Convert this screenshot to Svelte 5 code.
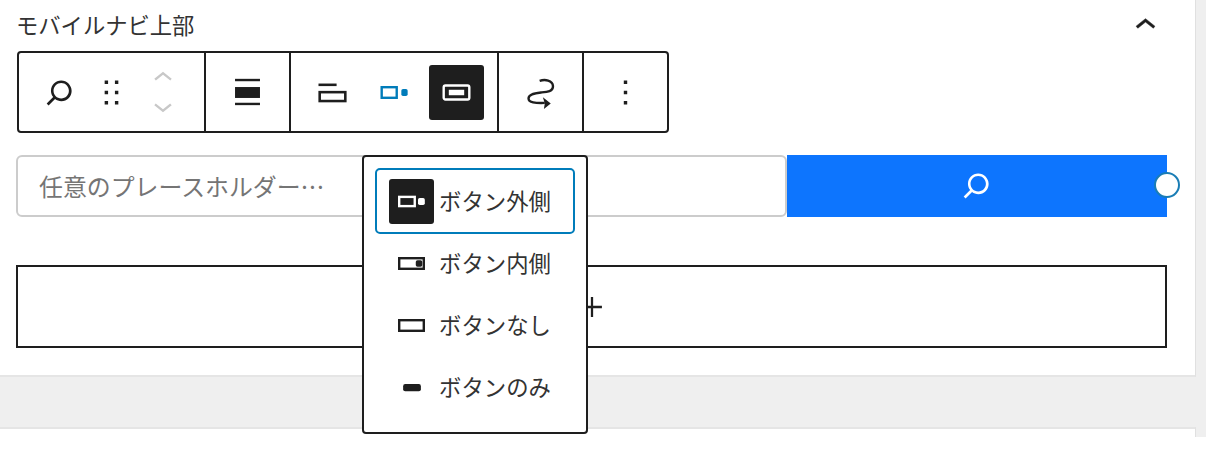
<script>
  const searchPath = 'M13 5c-3.3 0-6 2.7-6 6 0 1.4.5 2.7 1.3 3.7l-3.8 3.8 1.1 1.1 3.8-3.8c1 .8 2.3 1.3 3.7 1.3 3.3 0 6-2.7 6-6S16.3 5 13 5zm0 10.5c-2.5 0-4.5-2-4.500-4.500s2-4.500 4.500-4.500 4.500 2 4.500 4.500-2 4.500-4.500 4.500z';

  const options = [
    { label: 'ボタン外側', kind: 'outside', active: true },
    { label: 'ボタン内側', kind: 'inside' },
    { label: 'ボタンなし', kind: 'none' },
    { label: 'ボタンのみ', kind: 'only' },
  ];
</script>

{#snippet icon(path)}
  <svg class="icon" viewBox="0 0 24 24" fill="currentColor"><path d={path} /></svg>
{/snippet}

<div class="page">
  <section class="panel">
    <header class="head">
      <h2>モバイルナビ上部</h2>
      <svg class="chevron" viewBox="0 0 24 24" fill="currentColor"><path d="M6.5 12.4L12 8l5.5 4.4-.9 1.2L12 10l-4.5 3.6-1-1.2z" /></svg>
    </header>

    <div class="toolbar">
      <div class="group first">
        <button>{@render icon(searchPath)}</button>
        <button>{@render icon('M8 7h2V5H8v2zm0 6h2v-2H8v2zm0 6h2v-2H8v2zm6-14v2h2V5h-2zm0 8h2v-2h-2v2zm0 6h2v-2h-2v2z')}</button>
        <div class="movers">
          <svg viewBox="0 0 24 24" fill="currentColor"><path d="M6.5 12.4L12 8l5.500 4.400-.9 1.200L12 10l-4.500 3.600-1-1.200z" /></svg>
          <svg viewBox="0 0 24 24" fill="currentColor"><path d="M17.500 11.600L12 16l-5.500-4.400.9-1.200L12 14l4.500-3.600 1 1.200z" /></svg>
        </div>
      </div>
      <div class="group single">
        <button>
          <svg class="icon" viewBox="0 0 24 24" fill="currentColor">
            <rect x="4.700" y="4" width="14.600" height="1.400" />
            <rect x="4.700" y="8.800" width="14.600" height="6.400" />
            <rect x="4.700" y="18" width="14.600" height="1.400" />
          </svg>
        </button>
      </div>
      <div class="group triple">
        <button>
          <svg class="icon" viewBox="0 0 24 24" fill="none" stroke="currentColor" stroke-width="1.500">
            <rect x="4.500" y="11.800" width="15" height="5.200" />
            <path d="M3.800 7.500h10.600" />
          </svg>
        </button>
        <button class="blue">
          <svg class="icon" viewBox="0 0 24 24" fill="none" stroke="currentColor" stroke-width="1.400">
            <rect x="4.500" y="8.900" width="8.800" height="6.200" />
            <rect x="16" y="10" width="3.700" height="4" rx="1" fill="currentColor" stroke="none" />
          </svg>
        </button>
        <button class="pressed">
          <svg class="icon" viewBox="0 0 24 24" fill="none" stroke="currentColor" stroke-width="1.400">
            <rect x="4.500" y="7.900" width="15" height="8.200" rx="1" />
            <rect x="7.500" y="10.400" width="9" height="3.200" fill="currentColor" stroke="none" />
          </svg>
        </button>
      </div>
      <div class="group single">
        <button>
          <svg class="icon" viewBox="0 0 24 24" fill="none" stroke="currentColor" stroke-width="1.400">
            <path d="M11.500 5.200c3-1 7.600-.5 7.800 3 .2 3.300-3.800 3.500-7 3.800-4.300.4-7.300 1.300-7.300 3.500 0 2.400 4 2.800 9.500 2.600" />
            <path d="M13.400 14.800l4.600 3.600-4 3.300.5-3.300z" fill="currentColor" stroke="none" />
          </svg>
        </button>
      </div>
      <div class="group single last">
        <button>{@render icon('M13 19h-2v-2h2v2zm0-6h-2v-2h2v2zm0-6h-2V5h2v2z')}</button>
      </div>
    </div>

    <div class="search">
      <div class="field">任意のプレースホルダー…</div>
      <div class="submit">
        <svg class="icon" viewBox="0 0 24 24" fill="currentColor"><path d={searchPath} /></svg>
        <span class="handle"></span>
      </div>
    </div>

    <div class="appender">
      <svg viewBox="0 0 24 24" fill="currentColor"><path d="M11.200 5h1.600v6.200H19v1.600h-6.200V19h-1.600v-6.200H5v-1.600h6.200z" /></svg>
    </div>
  </section>

  <div class="next"></div>

  <div class="menu">
    {#each options as opt}
      <div class="item" class:active={opt.active}>
        <span class="glyph" class:dark={opt.active}>
          <svg class="icon" viewBox="0 0 24 24" fill="none" stroke="currentColor" stroke-width="1.400">
            {#if opt.kind === 'outside'}
              <rect x="4.800" y="9.300" width="9.100" height="5.400" />
              <rect x="15.800" y="10" width="4" height="4" rx="1" fill="currentColor" stroke="none" />
            {:else if opt.kind === 'inside'}
              <rect x="4.800" y="8.900" width="14.400" height="6.200" />
              <rect x="14.500" y="10.100" width="3.800" height="3.800" rx="1" fill="currentColor" stroke="none" />
            {:else if opt.kind === 'none'}
              <rect x="4.800" y="8.900" width="14.400" height="6.200" />
            {:else}
              <rect x="7.100" y="10" width="10.400" height="4.200" rx="1.200" fill="currentColor" stroke="none" />
            {/if}
          </svg>
        </span>
        <span class="label">{opt.label}</span>
      </div>
    {/each}
  </div>
</div>

<style>
  :global(body) {
    background: #fff;
  }

  .page {
    position: relative;
    width: 1206px;
    height: 437px;
    background: #efefef;
    overflow: hidden;
    font-family: "Noto Sans CJK JP", "Noto Sans", sans-serif;
    color: #1e1e1e;
  }

  .panel {
    box-sizing: border-box;
    width: 1196px;
    height: 377px;
    padding-left: 16px;
    background: #fff;
    border-right: 1px solid #e0e0e0;
    border-bottom: 2px solid #e5e5e5;
  }

  .next {
    box-sizing: border-box;
    width: 1196px;
    height: 10px;
    margin-top: 50px;
    background: #fff;
    border-top: 2px solid #e5e5e5;
    border-right: 1px solid #e0e0e0;
  }

  /* Header */
  .head {
    display: flex;
    align-items: center;
    justify-content: space-between;
    height: 51px;
    padding-right: 29px;
  }
  h2 {
    margin: -3px 0 0;
    font-size: 22.300px;
    font-weight: 400;
    line-height: 47px;
    color: #333;
  }
  .chevron {
    width: 41px;
    height: 41px;
    stroke: currentColor;
    stroke-width: 0.3;
  }

  /* Toolbar */
  .toolbar {
    box-sizing: border-box;
    display: flex;
    width: 652px;
    height: 82px;
    margin-left: 1px;
    border: 2px solid #1e1e1e;
    border-radius: 4px;
  }
  .group {
    box-sizing: border-box;
    display: flex;
    align-items: center;
    border-right: 2px solid #1e1e1e;
  }
  .group.last {
    border-right: 0;
  }
  .first {
    width: 187px;
    padding-left: 14px;
  }
  .single {
    width: 85px;
    justify-content: center;
  }
  .single.last {
    width: 83px;
  }
  .triple {
    width: 209px;
    gap: 7px;
    padding-left: 14px;
  }
  button {
    display: flex;
    align-items: center;
    justify-content: center;
    width: 52px;
    height: 55px;
    padding: 0;
    border: 0;
    border-radius: 3px;
    background: none;
    color: inherit;
  }
  .triple button {
    width: 55px;
  }
  .blue {
    color: #007cba;
  }
  .pressed {
    background: #1e1e1e;
    color: #fff;
  }
  .icon {
    display: block;
    width: 41px;
    height: 41px;
  }
  .movers {
    display: flex;
    flex-direction: column;
    align-items: center;
    width: 52px;
    color: #c8c8c8;
  }
  .movers svg {
    width: 38px;
    height: 38px;
    margin: -5px 0;
  }

  /* Search block */
  .search {
    display: flex;
    width: 1151px;
    height: 62px;
    margin-top: 22px;
  }
  .field {
    box-sizing: border-box;
    flex: 1;
    padding-left: 21px;
    border: 2px solid #ccc;
    border-radius: 6px;
    font-size: 23.900px;
    line-height: 57px;
    color: #757575;
  }
  .submit {
    position: relative;
    display: flex;
    align-items: center;
    justify-content: center;
    box-sizing: border-box;
    width: 380px;
    padding: 0 2px 2px 0;
    background: #0d75fe;
    color: #fff;
  }
  .handle {
    position: absolute;
    top: 17px;
    right: -13px;
    box-sizing: border-box;
    width: 26px;
    height: 26px;
    background: #fff;
    border: 2.500px solid #1a7db5;
    border-radius: 50%;
  }

  .appender {
    box-sizing: border-box;
    display: flex;
    align-items: center;
    justify-content: center;
    width: 1151px;
    height: 83px;
    margin-top: 48px;
    border: 2px solid #1e1e1e;
  }
  .appender svg {
    width: 34px;
    height: 34px;
  }

  /* Popover over the block */
  .menu {
    position: absolute;
    top: 155px;
    left: 362px;
    box-sizing: border-box;
    width: 226px;
    height: 279px;
    padding: 13px 13px 0 13px;
    background: #fff;
    border: 2px solid #1e1e1e;
    border-radius: 4px;
  }
  .item {
    display: flex;
    align-items: center;
    gap: 5px;
    height: 62px;
    padding-left: 12px;
    border-radius: 3px;
  }
  .item.active {
    outline: 2.500px solid #007cba;
  }
  .glyph {
    display: flex;
    align-items: center;
    justify-content: center;
    width: 45px;
    height: 45px;
    border-radius: 3px;
  }
  .glyph.dark {
    background: #1e1e1e;
    color: #fff;
  }
  .label {
    margin-bottom: 3px;
    font-size: 22.400px;
    color: #333;
    white-space: nowrap;
  }
</style>
